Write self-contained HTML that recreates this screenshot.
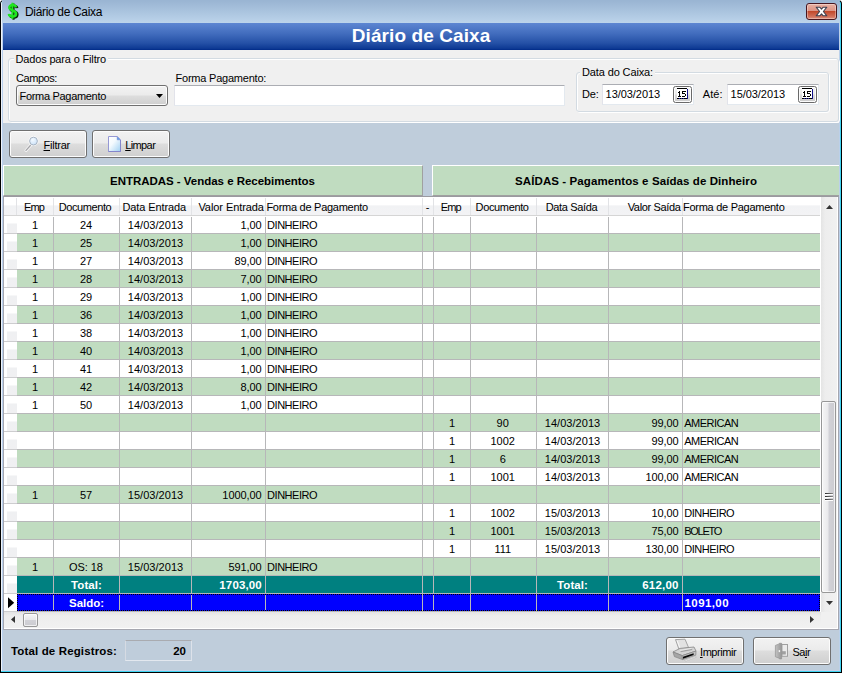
<!DOCTYPE html>
<html><head><meta charset="utf-8"><title>Diário de Caixa</title>
<style>
html,body{margin:0;padding:0;}
body{width:842px;height:673px;position:relative;overflow:hidden;background:#fff;font-family:"Liberation Sans",sans-serif;font-size:11px;color:#000;}
body>div,body>span,body>svg{position:absolute;display:block;}
.t{white-space:pre;line-height:20px;height:20px;transform-origin:0 0;}
u{text-decoration:underline;}
</style></head><body>
<div class="" style="left:0px;top:0px;width:842px;height:673px;background:#000;border-radius:4px 4px 0 0;"></div>
<div class="" style="left:1px;top:1px;width:840px;height:671px;background:#3fd4f2;border-radius:3px 3px 0 0;"></div>
<div class="" style="left:1px;top:1px;width:839px;height:670px;background:#eef3f9;border-radius:3px 3px 0 0;"></div>
<div class="" style="left:2px;top:1px;width:838px;height:670px;background:#bfcddb;border-radius:2px 2px 0 0;"></div>
<div class="" style="left:2px;top:23px;width:1px;height:647px;background:#b9d0ee;"></div>
<div class="" style="left:839px;top:23px;width:1px;height:647px;background:#bcd0ea;"></div>
<div class="" style="left:2px;top:670px;width:838px;height:1px;background:#c5cfe8;"></div>
<div class="" style="left:2px;top:1px;width:838px;height:22px;background:linear-gradient(#9ab5d3,#bcd4eb);border-radius:2px 2px 0 0;"></div>
<div class="" style="left:2px;top:0px;width:838px;height:1px;background:#9ab5d3;"></div>
<svg style="left:6px;top:2px;" width="14" height="19" viewBox="0 0 14 19">
<g fill="none" stroke-linecap="butt">
<g stroke="#072807" transform="translate(1.1,0.8)"><path d="M9.9 5.4C9.7 3.6 8.2 3 6.6 3 4.8 3 3.3 3.9 3.3 5.6c0 1.7 1.5 2.3 3.3 2.9 1.9.6 3.5 1.3 3.5 3.2 0 1.9-1.6 2.8-3.5 2.8-1.8 0-3.5-.7-3.7-2.6" stroke-width="2.8"/><path d="M6.4 .7V16.9" stroke-width="2.2"/></g>
<g stroke="#1fe61f"><path d="M9.9 5.4C9.7 3.6 8.2 3 6.6 3 4.8 3 3.3 3.9 3.3 5.6c0 1.7 1.5 2.3 3.3 2.9 1.9.6 3.5 1.3 3.5 3.2 0 1.9-1.6 2.8-3.5 2.8-1.8 0-3.5-.7-3.7-2.6" stroke-width="2.5"/><path d="M6.4 .7V16.9" stroke-width="1.9"/></g>
</g></svg>
<span class="t " style="left:25.00px;top:1.84px;font-size:12px;letter-spacing:-0.336px;">Diário de Caixa</span>
<div style="left:806px;top:3px;width:31px;height:17px;box-sizing:border-box;border:1px solid #47161f;border-radius:3px;background:linear-gradient(#e9b0a2 0%,#dc9384 47%,#c2492c 50%,#cf6c55 80%,#dc8e7c 100%);box-shadow:inset 0 0 0 1px rgba(255,255,255,.35);"></div>
<svg style="left:815px;top:6px;" width="13" height="11" viewBox="0 0 13 11"><path d="M1.2 1.2h3.6l1.7 1.9 1.7-1.9h3.6L8.4 5.5l3.4 4.3H8.2L6.5 7.9 4.8 9.8H1.2l3.4-4.3z" fill="#fff" stroke="#3f4150" stroke-width="1.1" stroke-linejoin="round"/></svg>
<div class="" style="left:3px;top:23px;width:836px;height:27px;background:linear-gradient(#5d86d2 0%,#416cbd 40%,#2450a6 75%,#0e3a94 94%,#002a88 100%);"></div>
<span class="t " style="left:351.79px;top:26.42px;font-size:19px;letter-spacing:0.082px;font-weight:bold;color:#fff;">Diário de Caixa</span>
<div class="" style="left:3px;top:50px;width:836px;height:73px;background:#f0f0f0;"></div>
<div class="" style="left:9px;top:59px;width:831px;height:64px;box-sizing:border-box;border:1px solid #fff;border-radius:3px;"></div>
<div class="" style="left:8px;top:58px;width:831px;height:64px;box-sizing:border-box;border:1px solid #d3dbe2;border-radius:3px;"></div>
<div class="" style="left:13.5px;top:56px;width:94.5px;height:5px;background:#f0f0f0;"></div>
<span class="t " style="left:15.50px;top:49.19px;font-size:11px;letter-spacing:-0.160px;">Dados para o Filtro</span>
<div class="" style="left:577px;top:73px;width:253px;height:40px;box-sizing:border-box;border:1px solid #fff;border-radius:3px;"></div>
<div class="" style="left:576px;top:72px;width:253px;height:40px;box-sizing:border-box;border:1px solid #d3dbe2;border-radius:3px;"></div>
<div class="" style="left:580px;top:70px;width:75px;height:5px;background:#f0f0f0;"></div>
<span class="t " style="left:582.00px;top:62.19px;font-size:11px;letter-spacing:-0.126px;">Data do Caixa:</span>
<span class="t " style="left:16.00px;top:68.19px;font-size:11px;letter-spacing:-0.431px;">Campos:</span>
<span class="t " style="left:175.50px;top:68.19px;font-size:11px;letter-spacing:-0.216px;">Forma Pagamento:</span>
<div style="left:16px;top:85px;width:152px;height:21px;box-sizing:border-box;border:1px solid #707070;border-radius:3px;background:linear-gradient(#f2f2f2 0%,#ebebeb 48%,#dddddd 52%,#cfcfcf 100%);box-shadow:inset 0 0 0 1px #fcfcfc;"></div>
<span class="t " style="left:19.50px;top:86.19px;font-size:11px;letter-spacing:-0.307px;">Forma Pagamento</span>
<svg style="left:156px;top:94px;" width="7" height="4" viewBox="0 0 7 4"><path d="M0 0h7L3.5 4z" fill="#000"/></svg>
<div style="left:174px;top:85px;width:391px;height:21px;box-sizing:border-box;border:1px solid #e3e9ef;border-top-color:#abadb3;border-left-color:#e2e3ea;border-radius:1px;background:#fff;"></div>
<span class="t " style="left:582.00px;top:84.19px;font-size:11px;letter-spacing:-0.206px;">De:</span>
<div style="left:602px;top:84px;width:92px;height:21px;box-sizing:border-box;border:1px solid #e3e9ef;border-top-color:#abadb3;border-left-color:#e2e3ea;background:#fff;"></div>
<span class="t " style="left:605.60px;top:84.19px;font-size:11px;letter-spacing:-0.055px;">13/03/2013</span>
<div style="left:673px;top:86px;width:19px;height:17px;box-sizing:border-box;border:1px solid #6a6a6a;border-radius:2.5px;background:linear-gradient(#f2f2f2 0%,#ebebeb 48%,#dadada 52%,#cbcbcb 100%);box-shadow:inset 0 0 0 1px #fcfcfc;"></div>
<svg style="left:677px;top:88px;" width="11" height="11" viewBox="0 0 11 11" shape-rendering="crispEdges"><rect x="0" y="1" width="10" height="9" fill="#fff"/><rect x="0" y="0" width="10" height="1" fill="#000"/><rect x="0" y="10" width="10" height="1" fill="#000"/><rect x="2" y="10" width="1" height="1" fill="#1a1aa0"/><rect x="4" y="10" width="1" height="1" fill="#1a1aa0"/><rect x="6" y="10" width="1" height="1" fill="#1a1aa0"/><rect x="10" y="1" width="1" height="10" fill="#10108a"/><g fill="#000"><rect x="2" y="3" width="1" height="1"/><rect x="1" y="4" width="1" height="1"/><rect x="2" y="4" width="1" height="1"/><rect x="2" y="5" width="1" height="1"/><rect x="2" y="6" width="1" height="1"/><rect x="2" y="7" width="1" height="1"/><rect x="1" y="8" width="1" height="1"/><rect x="2" y="8" width="1" height="1"/><rect x="3" y="8" width="1" height="1"/><rect x="5" y="3" width="1" height="1"/><rect x="6" y="3" width="1" height="1"/><rect x="7" y="3" width="1" height="1"/><rect x="8" y="3" width="1" height="1"/><rect x="5" y="4" width="1" height="1"/><rect x="5" y="5" width="1" height="1"/><rect x="6" y="5" width="1" height="1"/><rect x="7" y="5" width="1" height="1"/><rect x="8" y="6" width="1" height="1"/><rect x="8" y="7" width="1" height="1"/><rect x="5" y="8" width="1" height="1"/><rect x="6" y="8" width="1" height="1"/><rect x="7" y="8" width="1" height="1"/></g></svg>
<span class="t " style="left:702.70px;top:84.19px;font-size:11px;letter-spacing:0.108px;">Até:</span>
<div style="left:727px;top:84px;width:92px;height:21px;box-sizing:border-box;border:1px solid #e3e9ef;border-top-color:#abadb3;border-left-color:#e2e3ea;background:#fff;"></div>
<span class="t " style="left:730.60px;top:84.19px;font-size:11px;letter-spacing:-0.055px;">15/03/2013</span>
<div style="left:798px;top:86px;width:19px;height:17px;box-sizing:border-box;border:1px solid #6a6a6a;border-radius:2.5px;background:linear-gradient(#f2f2f2 0%,#ebebeb 48%,#dadada 52%,#cbcbcb 100%);box-shadow:inset 0 0 0 1px #fcfcfc;"></div>
<svg style="left:802px;top:88px;" width="11" height="11" viewBox="0 0 11 11" shape-rendering="crispEdges"><rect x="0" y="1" width="10" height="9" fill="#fff"/><rect x="0" y="0" width="10" height="1" fill="#000"/><rect x="0" y="10" width="10" height="1" fill="#000"/><rect x="2" y="10" width="1" height="1" fill="#1a1aa0"/><rect x="4" y="10" width="1" height="1" fill="#1a1aa0"/><rect x="6" y="10" width="1" height="1" fill="#1a1aa0"/><rect x="10" y="1" width="1" height="10" fill="#10108a"/><g fill="#000"><rect x="2" y="3" width="1" height="1"/><rect x="1" y="4" width="1" height="1"/><rect x="2" y="4" width="1" height="1"/><rect x="2" y="5" width="1" height="1"/><rect x="2" y="6" width="1" height="1"/><rect x="2" y="7" width="1" height="1"/><rect x="1" y="8" width="1" height="1"/><rect x="2" y="8" width="1" height="1"/><rect x="3" y="8" width="1" height="1"/><rect x="5" y="3" width="1" height="1"/><rect x="6" y="3" width="1" height="1"/><rect x="7" y="3" width="1" height="1"/><rect x="8" y="3" width="1" height="1"/><rect x="5" y="4" width="1" height="1"/><rect x="5" y="5" width="1" height="1"/><rect x="6" y="5" width="1" height="1"/><rect x="7" y="5" width="1" height="1"/><rect x="8" y="6" width="1" height="1"/><rect x="8" y="7" width="1" height="1"/><rect x="5" y="8" width="1" height="1"/><rect x="6" y="8" width="1" height="1"/><rect x="7" y="8" width="1" height="1"/></g></svg>
<div style="left:9px;top:130px;width:78px;height:28px;box-sizing:border-box;border:1px solid #707070;border-radius:3px;background:linear-gradient(#f2f2f2 0%,#ebebeb 46%,#dddddd 50%,#cfcfcf 100%);box-shadow:inset 0 0 0 1px #fcfcfc;"></div>
<div style="left:92px;top:130px;width:78px;height:28px;box-sizing:border-box;border:1px solid #707070;border-radius:3px;background:linear-gradient(#f2f2f2 0%,#ebebeb 46%,#dddddd 50%,#cfcfcf 100%);box-shadow:inset 0 0 0 1px #fcfcfc;"></div>
<div style="left:666px;top:637px;width:78px;height:28px;box-sizing:border-box;border:1px solid #707070;border-radius:3px;background:linear-gradient(#f2f2f2 0%,#ebebeb 46%,#dddddd 50%,#cfcfcf 100%);box-shadow:inset 0 0 0 1px #fcfcfc;"></div>
<div style="left:753px;top:637px;width:78px;height:28px;box-sizing:border-box;border:1px solid #707070;border-radius:3px;background:linear-gradient(#f2f2f2 0%,#ebebeb 46%,#dddddd 50%,#cfcfcf 100%);box-shadow:inset 0 0 0 1px #fcfcfc;"></div>
<svg style="left:24px;top:134px;" width="18" height="18" viewBox="0 0 18 18">
<defs><radialGradient id="lg" cx=".4" cy=".35" r=".7"><stop offset="0" stop-color="#f4faff"/><stop offset="1" stop-color="#c9e0f8"/></radialGradient></defs>
<path d="M2 16.4L6.6 11.2" stroke="#fff" stroke-opacity=".75" stroke-width="3" stroke-linecap="round"/>
<path d="M2 16.4L6.6 11.2" stroke="#a4a4a8" stroke-width="1.3" stroke-linecap="round"/>
<circle cx="9.5" cy="7.1" r="5" fill="#fff" fill-opacity=".7"/>
<circle cx="9.5" cy="7.1" r="3.9" fill="url(#lg)" stroke="#a7b3c1" stroke-width="1"/>
</svg>
<span class="t " style="left:43.50px;top:135.19px;font-size:11px;letter-spacing:-0.230px;"><u>F</u>iltrar</span>
<svg style="left:108px;top:136px;" width="14" height="16" viewBox="0 0 14 16">
<defs><linearGradient id="pg" x1="0" y1="0" x2="1" y2="1"><stop offset="0" stop-color="#ffffff"/><stop offset=".4" stop-color="#f4fafe"/><stop offset="1" stop-color="#9fd0f3"/></linearGradient></defs>
<path d="M.5 .5h8.7l3.3 3.3v11.7h-12z" fill="url(#pg)" stroke="#9598d4" stroke-width="1" stroke-linejoin="miter"/>
<path d="M.5 15.5h12V4" fill="none" stroke="#8486cc" stroke-width="1"/>
<path d="M9.2 .8v3h3z" fill="#3f9ff0" stroke="#8a8dd2" stroke-width=".6"/></svg>
<span class="t " style="left:125.20px;top:135.19px;font-size:11px;letter-spacing:-0.604px;"><u>L</u>impar</span>
<svg style="left:672px;top:638px;" width="25" height="24" viewBox="0 0 25 24">
<path d="M3.5 1.6L13 1.2l3.6 8.4-9.6 1.8z" fill="#e2e2e2" stroke="#9c9c9c" stroke-width=".9" stroke-linejoin="round"/>
<path d="M5.2 2.6l2.6 7" stroke="#f8f8f8" stroke-width="1"/>
<path d="M1 14L8 10.4 22 9l2 4-13.8 4.6z" fill="#d4d4d4" stroke="#878787" stroke-width=".8" stroke-linejoin="round"/>
<path d="M8.6 13.6L20.2 11.4" stroke="#a2a2a2" stroke-width="1.3"/>
<path d="M8.3 12.4L19.6 10.4" stroke="#f4f4f4" stroke-width=".7"/>
<path d="M1 14l9.2 3.6.4 4L2.4 18.6z" fill="#a6a6a6" stroke="#838383" stroke-width=".7" stroke-linejoin="round"/>
<path d="M10.2 17.6L24 13l-.2 4.2-13.2 4.4z" fill="#c2c2c2" stroke="#838383" stroke-width=".7" stroke-linejoin="round"/>
<path d="M11 18.8L21.6 15.2v1.9L11 20.8z" fill="#0a0a0a"/>
<path d="M12.6 22.4L23.2 18.6l1.2.6-10.6 4z" fill="#f6f6f6" stroke="#b0b0b0" stroke-width=".5"/></svg>
<span class="t " style="left:700.00px;top:642.19px;font-size:11px;letter-spacing:-0.439px;"><u>I</u>mprimir</span>
<svg style="left:774px;top:642px;" width="15" height="18" viewBox="0 0 15 18">
<defs><linearGradient id="dg" x1="0" y1="0" x2="1" y2="0"><stop offset="0" stop-color="#c2c2c2"/><stop offset="1" stop-color="#979797"/></linearGradient></defs>
<rect x="7.9" y="2.5" width="5.6" height="11.8" fill="#ebebeb" stroke="#a0a0a0" stroke-width="1"/>
<rect x="8" y="9.2" width="3.8" height="3.3" fill="#a0a0a0"/>
<path d="M1.4 3.4L5.2 1.9 5.4 1.3H7.6V16.9H5.4L5.2 16.2 1.4 14.8z" fill="url(#dg)" stroke="#929292" stroke-width=".7" stroke-linejoin="round"/>
<rect x="4.7" y="8.1" width="1.4" height="2" fill="#f4f4f4"/></svg>
<span class="t " style="left:792.50px;top:642.19px;font-size:11px;letter-spacing:-0.515px;">Sa<u>i</u>r</span>
<div class="" style="left:3px;top:165px;width:420px;height:31px;box-sizing:border-box;background:#c0dcc0;border-top:1px solid #fff;border-left:1px solid #fff;border-right:1px solid #a0a0a0;border-bottom:1px solid #a0a0a0;"></div>
<div class="" style="left:432px;top:165px;width:407px;height:31px;box-sizing:border-box;background:#c0dcc0;border-top:1px solid #fff;border-left:1px solid #fff;border-bottom:1px solid #a0a0a0;"></div>
<span class="t " style="left:109.99px;top:171.02px;font-size:11.5px;letter-spacing:-0.024px;font-weight:bold;">ENTRADAS - Vendas e Recebimentos</span>
<span class="t " style="left:515.05px;top:171.02px;font-size:11.5px;letter-spacing:0.091px;font-weight:bold;">SAÍDAS - Pagamentos e Saídas de Dinheiro</span>
<div class="" style="left:3px;top:196px;width:836px;height:434px;box-sizing:border-box;background:#fff;border:1px solid #a6a7b0;border-top-color:#9a9aa0;"></div>
<div class="" style="left:4px;top:197px;width:816px;height:18px;background:linear-gradient(#ffffff 0%,#ffffff 42%,#f1f2f4 50%,#f3f3f5 100%);"></div>
<div class="" style="left:4px;top:215px;width:816px;height:1px;background:#d5d5d5;"></div>
<div class="" style="left:16px;top:198px;width:1px;height:17px;background:#e2e3e6;"></div>
<div class="" style="left:53px;top:198px;width:1px;height:17px;background:#e2e3e6;"></div>
<div class="" style="left:119px;top:198px;width:1px;height:17px;background:#e2e3e6;"></div>
<div class="" style="left:191px;top:198px;width:1px;height:17px;background:#e2e3e6;"></div>
<div class="" style="left:265px;top:198px;width:1px;height:17px;background:#e2e3e6;"></div>
<div class="" style="left:422px;top:198px;width:1px;height:17px;background:#e2e3e6;"></div>
<div class="" style="left:433px;top:198px;width:1px;height:17px;background:#e2e3e6;"></div>
<div class="" style="left:470px;top:198px;width:1px;height:17px;background:#e2e3e6;"></div>
<div class="" style="left:536px;top:198px;width:1px;height:17px;background:#e2e3e6;"></div>
<div class="" style="left:608px;top:198px;width:1px;height:17px;background:#e2e3e6;"></div>
<div class="" style="left:682px;top:198px;width:1px;height:17px;background:#e2e3e6;"></div>
<span class="t " style="left:23.96px;top:197.19px;font-size:11px;letter-spacing:-0.873px;">Emp</span>
<span class="t " style="left:58.74px;top:197.19px;font-size:11px;letter-spacing:-0.417px;">Documento</span>
<span class="t " style="left:122.38px;top:197.19px;font-size:11px;letter-spacing:-0.089px;">Data Entrada</span>
<span class="t " style="left:198.43px;top:197.19px;font-size:11px;letter-spacing:-0.073px;">Valor Entrada</span>
<span class="t " style="left:266.40px;top:197.19px;font-size:11px;letter-spacing:-0.272px;">Forma de Pagamento</span>
<span class="t " style="left:425.77px;top:197.19px;font-size:11px;">-</span>
<span class="t " style="left:440.86px;top:197.19px;font-size:11px;letter-spacing:-0.873px;">Emp</span>
<span class="t " style="left:475.62px;top:197.19px;font-size:11px;letter-spacing:-0.361px;">Documento</span>
<span class="t " style="left:545.67px;top:197.19px;font-size:11px;letter-spacing:-0.354px;">Data Saída</span>
<span class="t " style="left:627.67px;top:197.19px;font-size:11px;letter-spacing:-0.333px;">Valor Saída</span>
<span class="t " style="left:683.00px;top:197.19px;font-size:11px;letter-spacing:-0.272px;">Forma de Pagamento</span>
<div class="" style="left:7px;top:216px;width:10px;height:17px;background:linear-gradient(#fff 0%,#fff 42%,#eff0f2 46%,#f0f0f2 100%);"></div>
<div class="" style="left:4px;top:233px;width:13px;height:1px;background:#cdcdcf;"></div>
<div class="" style="left:17px;top:233px;width:803px;height:1px;background:#b7b7b9;"></div>
<span class="t " style="left:31.94px;top:215.19px;font-size:11px;">1</span>
<span class="t " style="left:79.91px;top:215.19px;font-size:11px;letter-spacing:-0.061px;">24</span>
<span class="t " style="left:127.77px;top:215.19px;font-size:11px;letter-spacing:0.045px;">14/03/2013</span>
<span class="t " style="left:240.43px;top:215.19px;font-size:11px;letter-spacing:-0.080px;">1,00</span>
<span class="t " style="left:267.10px;top:215.19px;font-size:11px;letter-spacing:-0.473px;">DINHEIRO</span>
<div class="" style="left:7px;top:234px;width:10px;height:17px;background:linear-gradient(#fff 0%,#fff 42%,#eff0f2 46%,#f0f0f2 100%);"></div>
<div class="" style="left:17px;top:234px;width:803px;height:17px;background:#c0dcc0;"></div>
<div class="" style="left:4px;top:251px;width:13px;height:1px;background:#cdcdcf;"></div>
<div class="" style="left:17px;top:251px;width:803px;height:1px;background:#b7b7b9;"></div>
<span class="t " style="left:31.94px;top:233.19px;font-size:11px;">1</span>
<span class="t " style="left:79.91px;top:233.19px;font-size:11px;letter-spacing:-0.061px;">25</span>
<span class="t " style="left:127.77px;top:233.19px;font-size:11px;letter-spacing:0.045px;">14/03/2013</span>
<span class="t " style="left:240.43px;top:233.19px;font-size:11px;letter-spacing:-0.080px;">1,00</span>
<span class="t " style="left:267.10px;top:233.19px;font-size:11px;letter-spacing:-0.473px;">DINHEIRO</span>
<div class="" style="left:7px;top:252px;width:10px;height:17px;background:linear-gradient(#fff 0%,#fff 42%,#eff0f2 46%,#f0f0f2 100%);"></div>
<div class="" style="left:4px;top:269px;width:13px;height:1px;background:#cdcdcf;"></div>
<div class="" style="left:17px;top:269px;width:803px;height:1px;background:#b7b7b9;"></div>
<span class="t " style="left:31.94px;top:251.19px;font-size:11px;">1</span>
<span class="t " style="left:79.91px;top:251.19px;font-size:11px;letter-spacing:-0.061px;">27</span>
<span class="t " style="left:127.77px;top:251.19px;font-size:11px;letter-spacing:0.045px;">14/03/2013</span>
<span class="t " style="left:234.40px;top:251.19px;font-size:11px;letter-spacing:-0.083px;">89,00</span>
<span class="t " style="left:267.10px;top:251.19px;font-size:11px;letter-spacing:-0.473px;">DINHEIRO</span>
<div class="" style="left:7px;top:270px;width:10px;height:17px;background:linear-gradient(#fff 0%,#fff 42%,#eff0f2 46%,#f0f0f2 100%);"></div>
<div class="" style="left:17px;top:270px;width:803px;height:17px;background:#c0dcc0;"></div>
<div class="" style="left:4px;top:287px;width:13px;height:1px;background:#cdcdcf;"></div>
<div class="" style="left:17px;top:287px;width:803px;height:1px;background:#b7b7b9;"></div>
<span class="t " style="left:31.94px;top:269.19px;font-size:11px;">1</span>
<span class="t " style="left:79.91px;top:269.19px;font-size:11px;letter-spacing:-0.061px;">28</span>
<span class="t " style="left:127.77px;top:269.19px;font-size:11px;letter-spacing:0.045px;">14/03/2013</span>
<span class="t " style="left:240.43px;top:269.19px;font-size:11px;letter-spacing:-0.080px;">7,00</span>
<span class="t " style="left:267.10px;top:269.19px;font-size:11px;letter-spacing:-0.473px;">DINHEIRO</span>
<div class="" style="left:7px;top:288px;width:10px;height:17px;background:linear-gradient(#fff 0%,#fff 42%,#eff0f2 46%,#f0f0f2 100%);"></div>
<div class="" style="left:4px;top:305px;width:13px;height:1px;background:#cdcdcf;"></div>
<div class="" style="left:17px;top:305px;width:803px;height:1px;background:#b7b7b9;"></div>
<span class="t " style="left:31.94px;top:287.19px;font-size:11px;">1</span>
<span class="t " style="left:79.91px;top:287.19px;font-size:11px;letter-spacing:-0.061px;">29</span>
<span class="t " style="left:127.77px;top:287.19px;font-size:11px;letter-spacing:0.045px;">14/03/2013</span>
<span class="t " style="left:240.43px;top:287.19px;font-size:11px;letter-spacing:-0.080px;">1,00</span>
<span class="t " style="left:267.10px;top:287.19px;font-size:11px;letter-spacing:-0.473px;">DINHEIRO</span>
<div class="" style="left:7px;top:306px;width:10px;height:17px;background:linear-gradient(#fff 0%,#fff 42%,#eff0f2 46%,#f0f0f2 100%);"></div>
<div class="" style="left:17px;top:306px;width:803px;height:17px;background:#c0dcc0;"></div>
<div class="" style="left:4px;top:323px;width:13px;height:1px;background:#cdcdcf;"></div>
<div class="" style="left:17px;top:323px;width:803px;height:1px;background:#b7b7b9;"></div>
<span class="t " style="left:31.94px;top:305.19px;font-size:11px;">1</span>
<span class="t " style="left:79.91px;top:305.19px;font-size:11px;letter-spacing:-0.061px;">36</span>
<span class="t " style="left:127.77px;top:305.19px;font-size:11px;letter-spacing:0.045px;">14/03/2013</span>
<span class="t " style="left:240.43px;top:305.19px;font-size:11px;letter-spacing:-0.080px;">1,00</span>
<span class="t " style="left:267.10px;top:305.19px;font-size:11px;letter-spacing:-0.473px;">DINHEIRO</span>
<div class="" style="left:7px;top:324px;width:10px;height:17px;background:linear-gradient(#fff 0%,#fff 42%,#eff0f2 46%,#f0f0f2 100%);"></div>
<div class="" style="left:4px;top:341px;width:13px;height:1px;background:#cdcdcf;"></div>
<div class="" style="left:17px;top:341px;width:803px;height:1px;background:#b7b7b9;"></div>
<span class="t " style="left:31.94px;top:323.19px;font-size:11px;">1</span>
<span class="t " style="left:79.91px;top:323.19px;font-size:11px;letter-spacing:-0.061px;">38</span>
<span class="t " style="left:127.77px;top:323.19px;font-size:11px;letter-spacing:0.045px;">14/03/2013</span>
<span class="t " style="left:240.43px;top:323.19px;font-size:11px;letter-spacing:-0.080px;">1,00</span>
<span class="t " style="left:267.10px;top:323.19px;font-size:11px;letter-spacing:-0.473px;">DINHEIRO</span>
<div class="" style="left:7px;top:342px;width:10px;height:17px;background:linear-gradient(#fff 0%,#fff 42%,#eff0f2 46%,#f0f0f2 100%);"></div>
<div class="" style="left:17px;top:342px;width:803px;height:17px;background:#c0dcc0;"></div>
<div class="" style="left:4px;top:359px;width:13px;height:1px;background:#cdcdcf;"></div>
<div class="" style="left:17px;top:359px;width:803px;height:1px;background:#b7b7b9;"></div>
<span class="t " style="left:31.94px;top:341.19px;font-size:11px;">1</span>
<span class="t " style="left:79.91px;top:341.19px;font-size:11px;letter-spacing:-0.061px;">40</span>
<span class="t " style="left:127.77px;top:341.19px;font-size:11px;letter-spacing:0.045px;">14/03/2013</span>
<span class="t " style="left:240.43px;top:341.19px;font-size:11px;letter-spacing:-0.080px;">1,00</span>
<span class="t " style="left:267.10px;top:341.19px;font-size:11px;letter-spacing:-0.473px;">DINHEIRO</span>
<div class="" style="left:7px;top:360px;width:10px;height:17px;background:linear-gradient(#fff 0%,#fff 42%,#eff0f2 46%,#f0f0f2 100%);"></div>
<div class="" style="left:4px;top:377px;width:13px;height:1px;background:#cdcdcf;"></div>
<div class="" style="left:17px;top:377px;width:803px;height:1px;background:#b7b7b9;"></div>
<span class="t " style="left:31.94px;top:359.19px;font-size:11px;">1</span>
<span class="t " style="left:79.91px;top:359.19px;font-size:11px;letter-spacing:-0.061px;">41</span>
<span class="t " style="left:127.77px;top:359.19px;font-size:11px;letter-spacing:0.045px;">14/03/2013</span>
<span class="t " style="left:240.43px;top:359.19px;font-size:11px;letter-spacing:-0.080px;">1,00</span>
<span class="t " style="left:267.10px;top:359.19px;font-size:11px;letter-spacing:-0.473px;">DINHEIRO</span>
<div class="" style="left:7px;top:378px;width:10px;height:17px;background:linear-gradient(#fff 0%,#fff 42%,#eff0f2 46%,#f0f0f2 100%);"></div>
<div class="" style="left:17px;top:378px;width:803px;height:17px;background:#c0dcc0;"></div>
<div class="" style="left:4px;top:395px;width:13px;height:1px;background:#cdcdcf;"></div>
<div class="" style="left:17px;top:395px;width:803px;height:1px;background:#b7b7b9;"></div>
<span class="t " style="left:31.94px;top:377.19px;font-size:11px;">1</span>
<span class="t " style="left:79.91px;top:377.19px;font-size:11px;letter-spacing:-0.061px;">42</span>
<span class="t " style="left:127.77px;top:377.19px;font-size:11px;letter-spacing:0.045px;">14/03/2013</span>
<span class="t " style="left:240.43px;top:377.19px;font-size:11px;letter-spacing:-0.080px;">8,00</span>
<span class="t " style="left:267.10px;top:377.19px;font-size:11px;letter-spacing:-0.473px;">DINHEIRO</span>
<div class="" style="left:7px;top:396px;width:10px;height:17px;background:linear-gradient(#fff 0%,#fff 42%,#eff0f2 46%,#f0f0f2 100%);"></div>
<div class="" style="left:4px;top:413px;width:13px;height:1px;background:#cdcdcf;"></div>
<div class="" style="left:17px;top:413px;width:803px;height:1px;background:#b7b7b9;"></div>
<span class="t " style="left:31.94px;top:395.19px;font-size:11px;">1</span>
<span class="t " style="left:79.91px;top:395.19px;font-size:11px;letter-spacing:-0.061px;">50</span>
<span class="t " style="left:127.77px;top:395.19px;font-size:11px;letter-spacing:0.045px;">14/03/2013</span>
<span class="t " style="left:240.43px;top:395.19px;font-size:11px;letter-spacing:-0.080px;">1,00</span>
<span class="t " style="left:267.10px;top:395.19px;font-size:11px;letter-spacing:-0.473px;">DINHEIRO</span>
<div class="" style="left:7px;top:414px;width:10px;height:17px;background:linear-gradient(#fff 0%,#fff 42%,#eff0f2 46%,#f0f0f2 100%);"></div>
<div class="" style="left:17px;top:414px;width:803px;height:17px;background:#c0dcc0;"></div>
<div class="" style="left:4px;top:431px;width:13px;height:1px;background:#cdcdcf;"></div>
<div class="" style="left:17px;top:431px;width:803px;height:1px;background:#b7b7b9;"></div>
<span class="t " style="left:448.94px;top:413.19px;font-size:11px;">1</span>
<span class="t " style="left:496.61px;top:413.19px;font-size:11px;letter-spacing:-0.061px;">90</span>
<span class="t " style="left:544.77px;top:413.19px;font-size:11px;letter-spacing:0.045px;">14/03/2013</span>
<span class="t " style="left:651.50px;top:413.19px;font-size:11px;letter-spacing:-0.083px;">99,00</span>
<span class="t " style="left:684.20px;top:413.19px;font-size:11px;letter-spacing:-0.508px;">AMERICAN</span>
<div class="" style="left:7px;top:432px;width:10px;height:17px;background:linear-gradient(#fff 0%,#fff 42%,#eff0f2 46%,#f0f0f2 100%);"></div>
<div class="" style="left:4px;top:449px;width:13px;height:1px;background:#cdcdcf;"></div>
<div class="" style="left:17px;top:449px;width:803px;height:1px;background:#b7b7b9;"></div>
<span class="t " style="left:448.94px;top:431.19px;font-size:11px;">1</span>
<span class="t " style="left:490.56px;top:431.19px;font-size:11px;letter-spacing:-0.061px;">1002</span>
<span class="t " style="left:544.77px;top:431.19px;font-size:11px;letter-spacing:0.045px;">14/03/2013</span>
<span class="t " style="left:651.50px;top:431.19px;font-size:11px;letter-spacing:-0.083px;">99,00</span>
<span class="t " style="left:684.20px;top:431.19px;font-size:11px;letter-spacing:-0.508px;">AMERICAN</span>
<div class="" style="left:7px;top:450px;width:10px;height:17px;background:linear-gradient(#fff 0%,#fff 42%,#eff0f2 46%,#f0f0f2 100%);"></div>
<div class="" style="left:17px;top:450px;width:803px;height:17px;background:#c0dcc0;"></div>
<div class="" style="left:4px;top:467px;width:13px;height:1px;background:#cdcdcf;"></div>
<div class="" style="left:17px;top:467px;width:803px;height:1px;background:#b7b7b9;"></div>
<span class="t " style="left:448.94px;top:449.19px;font-size:11px;">1</span>
<span class="t " style="left:499.64px;top:449.19px;font-size:11px;">6</span>
<span class="t " style="left:544.77px;top:449.19px;font-size:11px;letter-spacing:0.045px;">14/03/2013</span>
<span class="t " style="left:651.50px;top:449.19px;font-size:11px;letter-spacing:-0.083px;">99,00</span>
<span class="t " style="left:684.20px;top:449.19px;font-size:11px;letter-spacing:-0.508px;">AMERICAN</span>
<div class="" style="left:7px;top:468px;width:10px;height:17px;background:linear-gradient(#fff 0%,#fff 42%,#eff0f2 46%,#f0f0f2 100%);"></div>
<div class="" style="left:4px;top:485px;width:13px;height:1px;background:#cdcdcf;"></div>
<div class="" style="left:17px;top:485px;width:803px;height:1px;background:#b7b7b9;"></div>
<span class="t " style="left:448.94px;top:467.19px;font-size:11px;">1</span>
<span class="t " style="left:490.56px;top:467.19px;font-size:11px;letter-spacing:-0.061px;">1001</span>
<span class="t " style="left:544.77px;top:467.19px;font-size:11px;letter-spacing:0.045px;">14/03/2013</span>
<span class="t " style="left:645.48px;top:467.19px;font-size:11px;letter-spacing:-0.084px;">100,00</span>
<span class="t " style="left:684.20px;top:467.19px;font-size:11px;letter-spacing:-0.508px;">AMERICAN</span>
<div class="" style="left:7px;top:486px;width:10px;height:17px;background:linear-gradient(#fff 0%,#fff 42%,#eff0f2 46%,#f0f0f2 100%);"></div>
<div class="" style="left:17px;top:486px;width:803px;height:17px;background:#c0dcc0;"></div>
<div class="" style="left:4px;top:503px;width:13px;height:1px;background:#cdcdcf;"></div>
<div class="" style="left:17px;top:503px;width:803px;height:1px;background:#b7b7b9;"></div>
<span class="t " style="left:31.94px;top:485.19px;font-size:11px;">1</span>
<span class="t " style="left:79.91px;top:485.19px;font-size:11px;letter-spacing:-0.061px;">57</span>
<span class="t " style="left:127.77px;top:485.19px;font-size:11px;letter-spacing:0.045px;">15/03/2013</span>
<span class="t " style="left:222.35px;top:485.19px;font-size:11px;letter-spacing:-0.085px;">1000,00</span>
<span class="t " style="left:267.10px;top:485.19px;font-size:11px;letter-spacing:-0.473px;">DINHEIRO</span>
<div class="" style="left:7px;top:504px;width:10px;height:17px;background:linear-gradient(#fff 0%,#fff 42%,#eff0f2 46%,#f0f0f2 100%);"></div>
<div class="" style="left:4px;top:521px;width:13px;height:1px;background:#cdcdcf;"></div>
<div class="" style="left:17px;top:521px;width:803px;height:1px;background:#b7b7b9;"></div>
<span class="t " style="left:448.94px;top:503.19px;font-size:11px;">1</span>
<span class="t " style="left:490.56px;top:503.19px;font-size:11px;letter-spacing:-0.061px;">1002</span>
<span class="t " style="left:544.77px;top:503.19px;font-size:11px;letter-spacing:0.045px;">15/03/2013</span>
<span class="t " style="left:651.50px;top:503.19px;font-size:11px;letter-spacing:-0.083px;">10,00</span>
<span class="t " style="left:684.20px;top:503.19px;font-size:11px;letter-spacing:-0.473px;">DINHEIRO</span>
<div class="" style="left:7px;top:522px;width:10px;height:17px;background:linear-gradient(#fff 0%,#fff 42%,#eff0f2 46%,#f0f0f2 100%);"></div>
<div class="" style="left:17px;top:522px;width:803px;height:17px;background:#c0dcc0;"></div>
<div class="" style="left:4px;top:539px;width:13px;height:1px;background:#cdcdcf;"></div>
<div class="" style="left:17px;top:539px;width:803px;height:1px;background:#b7b7b9;"></div>
<span class="t " style="left:448.94px;top:521.19px;font-size:11px;">1</span>
<span class="t " style="left:490.56px;top:521.19px;font-size:11px;letter-spacing:-0.061px;">1001</span>
<span class="t " style="left:544.77px;top:521.19px;font-size:11px;letter-spacing:0.045px;">15/03/2013</span>
<span class="t " style="left:651.50px;top:521.19px;font-size:11px;letter-spacing:-0.083px;">75,00</span>
<span class="t " style="left:684.20px;top:521.19px;font-size:11px;letter-spacing:-1.237px;">BOLETO</span>
<div class="" style="left:7px;top:540px;width:10px;height:17px;background:linear-gradient(#fff 0%,#fff 42%,#eff0f2 46%,#f0f0f2 100%);"></div>
<div class="" style="left:4px;top:557px;width:13px;height:1px;background:#cdcdcf;"></div>
<div class="" style="left:17px;top:557px;width:803px;height:1px;background:#b7b7b9;"></div>
<span class="t " style="left:448.94px;top:539.19px;font-size:11px;">1</span>
<span class="t " style="left:494.40px;top:539.19px;font-size:11px;letter-spacing:-0.056px;">111</span>
<span class="t " style="left:544.77px;top:539.19px;font-size:11px;letter-spacing:0.045px;">15/03/2013</span>
<span class="t " style="left:645.48px;top:539.19px;font-size:11px;letter-spacing:-0.084px;">130,00</span>
<span class="t " style="left:684.20px;top:539.19px;font-size:11px;letter-spacing:-0.473px;">DINHEIRO</span>
<div class="" style="left:7px;top:558px;width:10px;height:17px;background:linear-gradient(#fff 0%,#fff 42%,#eff0f2 46%,#f0f0f2 100%);"></div>
<div class="" style="left:17px;top:558px;width:803px;height:17px;background:#c0dcc0;"></div>
<div class="" style="left:4px;top:575px;width:13px;height:1px;background:#cdcdcf;"></div>
<div class="" style="left:17px;top:575px;width:803px;height:1px;background:#b7b7b9;"></div>
<span class="t " style="left:31.94px;top:557.19px;font-size:11px;">1</span>
<span class="t " style="left:69.02px;top:557.19px;font-size:11px;letter-spacing:-0.057px;">OS: 18</span>
<span class="t " style="left:127.77px;top:557.19px;font-size:11px;letter-spacing:0.045px;">15/03/2013</span>
<span class="t " style="left:228.38px;top:557.19px;font-size:11px;letter-spacing:-0.084px;">591,00</span>
<span class="t " style="left:267.10px;top:557.19px;font-size:11px;letter-spacing:-0.473px;">DINHEIRO</span>
<div class="" style="left:7px;top:576px;width:10px;height:17px;background:linear-gradient(#fff 0%,#fff 42%,#eff0f2 46%,#f0f0f2 100%);"></div>
<div class="" style="left:17px;top:576px;width:803px;height:17px;background:#008080;"></div>
<div class="" style="left:4px;top:593px;width:13px;height:1px;background:#cdcdcf;"></div>
<div class="" style="left:17px;top:593px;width:803px;height:1px;background:#b7b7b9;"></div>
<div class="" style="left:17px;top:594px;width:803px;height:17px;background:#0000ff;"></div>
<div class="" style="left:4px;top:611px;width:13px;height:1px;background:#cdcdcf;"></div>
<div class="" style="left:17px;top:611px;width:803px;height:1px;background:#b7b7b9;"></div>
<div class="" style="left:53px;top:217px;width:1px;height:395px;background:#b7b7b9;"></div>
<div class="" style="left:119px;top:217px;width:1px;height:395px;background:#b7b7b9;"></div>
<div class="" style="left:191px;top:217px;width:1px;height:395px;background:#b7b7b9;"></div>
<div class="" style="left:265px;top:217px;width:1px;height:395px;background:#b7b7b9;"></div>
<div class="" style="left:422px;top:217px;width:1px;height:395px;background:#b7b7b9;"></div>
<div class="" style="left:433px;top:217px;width:1px;height:395px;background:#b7b7b9;"></div>
<div class="" style="left:470px;top:217px;width:1px;height:395px;background:#b7b7b9;"></div>
<div class="" style="left:536px;top:217px;width:1px;height:395px;background:#b7b7b9;"></div>
<div class="" style="left:608px;top:217px;width:1px;height:395px;background:#b7b7b9;"></div>
<div class="" style="left:682px;top:217px;width:1px;height:395px;background:#b7b7b9;"></div>
<div class="" style="left:16px;top:216px;width:1px;height:396px;background:transparent;"></div>
<span class="t " style="left:71.05px;top:575.02px;font-size:11.5px;letter-spacing:0.092px;font-weight:bold;color:#fff;">Total:</span>
<span class="t " style="left:219.33px;top:575.02px;font-size:11.5px;letter-spacing:0.133px;font-weight:bold;color:#fff;">1703,00</span>
<span class="t " style="left:557.05px;top:575.02px;font-size:11.5px;letter-spacing:0.092px;font-weight:bold;color:#fff;">Total:</span>
<span class="t " style="left:642.22px;top:575.02px;font-size:11.5px;letter-spacing:0.221px;font-weight:bold;color:#fff;">612,00</span>
<span class="t " style="left:68.99px;top:593.02px;font-size:11.5px;letter-spacing:-0.023px;font-weight:bold;color:#fff;">Saldo:</span>
<span class="t " style="left:684.50px;top:593.02px;font-size:11.5px;letter-spacing:0.419px;font-weight:bold;color:#fff;">1091,00</span>
<div class="" style="left:17px;top:594px;width:803px;height:17px;box-sizing:border-box;border:1px dotted #000;"></div>
<svg style="left:8px;top:597px;" width="7" height="12" viewBox="0 0 7 12"><path d="M0 .3L6.2 5.8 0 11.3z" fill="#000"/></svg>
<div class="" style="left:821px;top:197px;width:16px;height:415px;background:linear-gradient(90deg,#e4e4e4 0%,#ededed 25%,#f1f1f1 100%);"></div>
<svg style="left:826px;top:205px;" width="7" height="4" viewBox="0 0 7 4"><path d="M0 4L3.5 0 7 4z" fill="#333"/></svg>
<svg style="left:826px;top:601px;" width="7" height="4" viewBox="0 0 7 4"><path d="M0 0L3.5 4 7 0z" fill="#333"/></svg>
<div class="" style="left:821px;top:401px;width:15px;height:192px;box-sizing:border-box;border:1px solid #979797;border-radius:2px;background:linear-gradient(90deg,#f6f6f6 0%,#e9e9eb 48%,#d2d2d7 52%,#cbcbd0 100%);box-shadow:inset 0 0 0 1px rgba(255,255,255,.7);"></div>
<div class="" style="left:825px;top:493px;width:8px;height:1px;background:linear-gradient(90deg,#2b2b2b,#8a8a8a);"></div>
<div class="" style="left:825px;top:494px;width:8px;height:1px;background:#fff;"></div>
<div class="" style="left:825px;top:496px;width:8px;height:1px;background:linear-gradient(90deg,#2b2b2b,#8a8a8a);"></div>
<div class="" style="left:825px;top:497px;width:8px;height:1px;background:#fff;"></div>
<div class="" style="left:825px;top:499px;width:8px;height:1px;background:linear-gradient(90deg,#2b2b2b,#8a8a8a);"></div>
<div class="" style="left:825px;top:500px;width:8px;height:1px;background:#fff;"></div>
<div class="" style="left:4px;top:612px;width:833px;height:16px;background:linear-gradient(#e4e4e4 0%,#ededed 25%,#f1f1f1 100%);"></div>
<div class="" style="left:821px;top:612px;width:16px;height:16px;background:#f0f0f0;"></div>
<svg style="left:11px;top:616px;" width="4" height="7" viewBox="0 0 4 7"><path d="M4 0L0 3.5 4 7z" fill="#333"/></svg>
<svg style="left:810px;top:616px;" width="4" height="7" viewBox="0 0 4 7"><path d="M0 0L4 3.5 0 7z" fill="#333"/></svg>
<div class="" style="left:23px;top:613px;width:15px;height:14px;box-sizing:border-box;border:1px solid #979797;border-radius:2px;background:linear-gradient(#f6f6f6 0%,#e9e9eb 48%,#d2d2d7 52%,#cbcbd0 100%);box-shadow:inset 0 0 0 1px rgba(255,255,255,.7);"></div>
<span class="t " style="left:11.00px;top:641.02px;font-size:11.5px;letter-spacing:0.142px;font-weight:bold;">Total de Registros:</span>
<div class="" style="left:125px;top:640px;width:67px;height:21px;box-sizing:border-box;border:1px solid #e3e8ef;border-top-color:#a9abb0;border-left-color:#d6dbe3;border-right-color:#dde2ea;"></div>
<span class="t " style="left:173.35px;top:641.02px;font-size:11.5px;letter-spacing:-0.146px;font-weight:bold;">20</span>
</body></html>
